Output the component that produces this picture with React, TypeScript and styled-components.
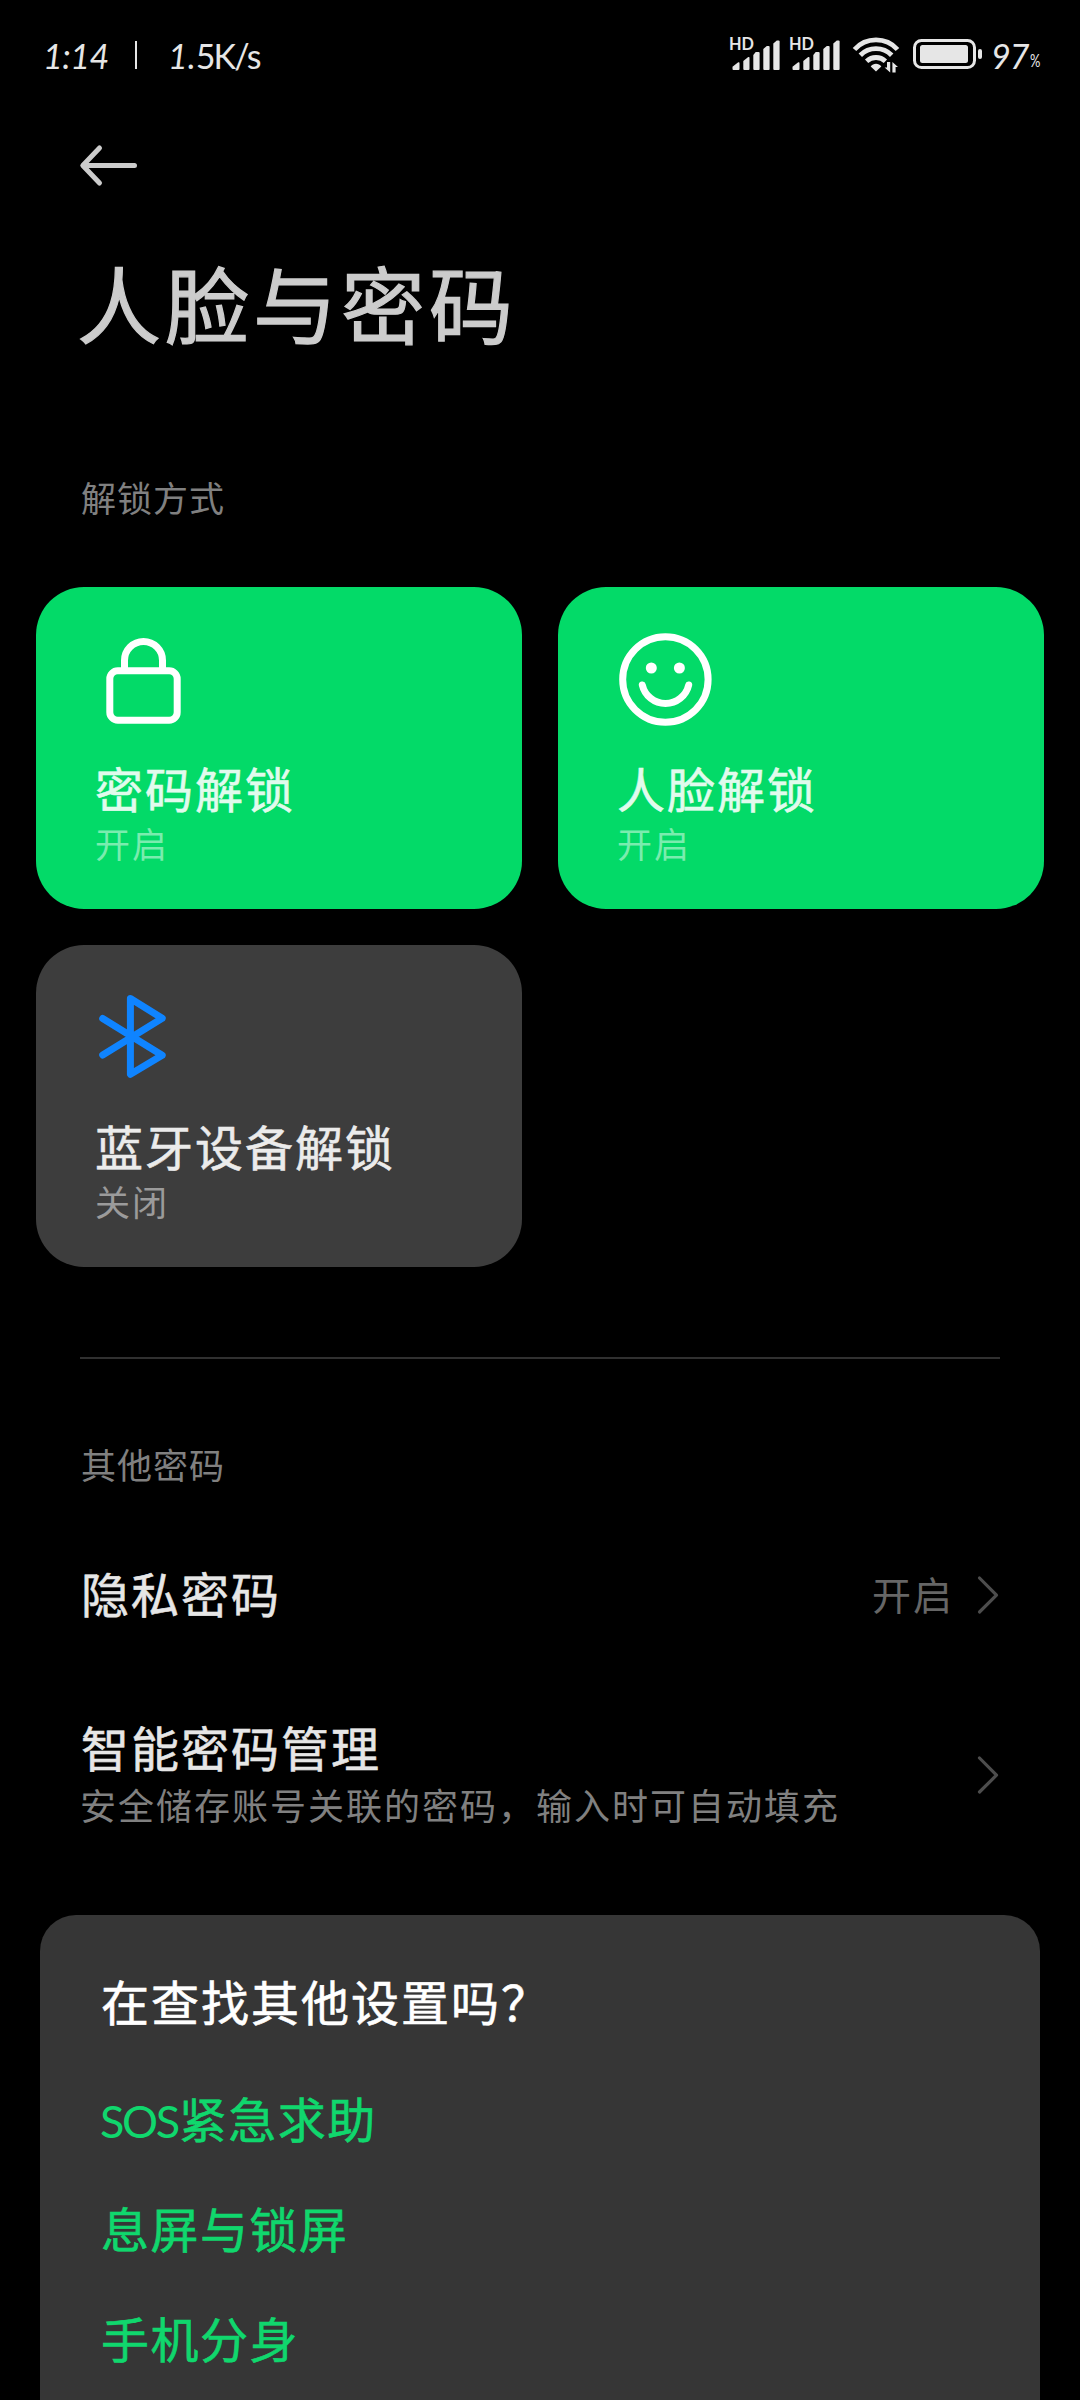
import React from "react";
import styled, { createGlobalStyle } from "styled-components";

const GlobalStyle = createGlobalStyle`
  html, body { margin: 0; padding: 0; background: #000; }
  * { box-sizing: border-box; }
`;

const cjk = `"Noto Sans CJK SC", "Noto Sans", sans-serif`;
const latin = `Lato, "Noto Sans CJK SC", sans-serif`;
const GREEN = "#03da68";

const Page = styled.main`
  width: 1080px;
  height: 2400px;
  overflow: hidden;
  display: flex;
  flex-direction: column;
  background: #000;
  font-family: ${cjk};
`;

const StatusBar = styled.header`
  height: 108px;
  flex: none;
  display: flex;
  align-items: center;
  justify-content: space-between;
  padding: 0 39px 0 43px;
  color: #e6e6e6;
  font-family: ${latin};
  font-size: 34px;
  line-height: 40px;
`;

const StatusGroup = styled.div`
  display: flex;
  align-items: center;
`;

const Clock = styled.span`
  width: 92px;
  font-style: italic;
  letter-spacing: -0.5px;
  padding-top: 3px;
`;

const Separator = styled.span`
  width: 2px;
  height: 28px;
  margin-top: 2px;
  background: #e6e6e6;
`;

const Speed = styled.span`
  margin-left: 31px;
  letter-spacing: -1.8px;
  padding-top: 3px;
`;

const Slanted = styled.span`
  font-style: italic;
  letter-spacing: 0;
`;

const Signal = styled.svg`
  width: 50px;
  height: 36px;
  margin-right: 10px;
  overflow: visible;
`;

const SignalTag = styled.text`
  font-family: ${latin};
  font-size: 16.5px;
  font-weight: 700;
`;

const Wifi = styled.svg`
  width: 48px;
  height: 38px;
  margin-left: 2px;
`;

const Battery = styled.svg`
  width: 70px;
  height: 32px;
  margin-left: 13px;
`;

const Level = styled.span`
  width: 37px;
  margin-left: 8px;
  padding-top: 3px;
  font-style: italic;
  letter-spacing: -1px;
`;

const Percent = styled.span`
  width: 11px;
  margin: 11px 0 0 2px;
  font-size: 18px;
  line-height: 20px;
  transform: scaleX(0.72);
  transform-origin: left center;
`;

const Nav = styled.nav`
  height: 114px;
  flex: none;
  display: flex;
  align-items: center;
  padding-left: 78px;
`;

const BackButton = styled.button`
  display: flex;
  padding: 0;
  border: 0;
  background: none;
`;

const Title = styled.h1`
  margin: 30px 0 0 77px;
  font-size: 84px;
  line-height: 100px;
  letter-spacing: 4px;
  font-weight: 400;
  color: #ccc;
  -webkit-text-stroke: 1.2px #ccc;
`;

const SectionLabel = styled.h2<{ $top: number }>`
  margin: ${(p) => p.$top}px 0 0 81px;
  font-size: 35px;
  line-height: 48px;
  letter-spacing: 1px;
  font-weight: 400;
  color: #808080;
`;

const CardGrid = styled.section`
  display: grid;
  grid-template-columns: 486px 486px;
  grid-auto-rows: 322px;
  gap: 36px;
  margin: 66px 36px 0;
`;

const Card = styled.article<{ $on: boolean }>`
  display: flex;
  flex-direction: column;
  padding: 40px 60px 0;
  border-radius: 48px;
  background: ${(p) => (p.$on ? GREEN : "#3d3d3d")};
`;

const CardIcon = styled.svg`
  width: 120px;
  height: 104px;
  flex: none;
  fill: none;
  stroke-width: 7;
`;

const CardTitle = styled.h3<{ $on: boolean }>`
  margin: 28px 0 0 -1px;
  font-size: 48px;
  line-height: 56px;
  letter-spacing: 2px;
  font-weight: 400;
  white-space: nowrap;
  color: ${(p) => (p.$on ? "#e1fbed" : "#ebebeb")};
  -webkit-text-stroke: 0.6px currentColor;
`;

const CardState = styled.p<{ $on: boolean }>`
  margin: 8px 0 0 -1px;
  font-size: 35px;
  line-height: 40px;
  letter-spacing: 2px;
  color: ${(p) => (p.$on ? "#7aecae" : "#9b9b9b")};
`;

const Divider = styled.hr`
  width: 920px;
  height: 2px;
  flex: none;
  margin: 90px 80px 0;
  border: 0;
  background: #303030;
`;

const List = styled.section`
  display: flex;
  flex-direction: column;
  margin-top: 17px;
`;

const Row = styled.div`
  height: 180px;
  display: flex;
  align-items: center;
  padding: 0 80px 0 81px;
`;

const RowText = styled.div`
  flex: 1;
  padding-bottom: 6px;
`;

const RowTitle = styled.div`
  font-size: 48px;
  line-height: 60px;
  letter-spacing: 2px;
  color: #e6e6e6;
  -webkit-text-stroke: 0.6px #e6e6e6;
`;

const RowNote = styled.div`
  margin: 4px 0 0 -1px;
  font-size: 36px;
  line-height: 48px;
  letter-spacing: 2px;
  white-space: nowrap;
  color: #808080;
`;

const RowValue = styled.span`
  margin-right: 22px;
  padding-bottom: 5px;
  font-size: 39px;
  line-height: 48px;
  letter-spacing: 2px;
  color: #666;
`;

const Panel = styled.section`
  flex: 1;
  margin: 50px 40px 0;
  padding: 55px 62px 0 61px;
  border-radius: 36px 36px 0 0;
  background: #363636;
`;

const PanelTitle = styled.h2`
  margin: 0 0 32px;
  font-size: 48px;
  line-height: 60px;
  letter-spacing: 2px;
  font-weight: 400;
  color: #fff;
  -webkit-text-stroke: 0.6px #fff;
`;

const PanelLink = styled.a`
  display: block;
  height: 110px;
  font-size: 48px;
  line-height: 110px;
  letter-spacing: 1.5px;
  color: #10d76d;
  -webkit-text-stroke: 0.6px #10d76d;
`;

const LatinRun = styled.span`
  margin: 0 1px 0 -1px;
  font-family: ${latin};
  font-size: 45px;
  line-height: 1;
  letter-spacing: -2.4px;
  -webkit-text-stroke: 0;
`;

const SignalIcon = () => (
  <Signal viewBox="0 0 50 36" fill="#e6e6e6">
    <SignalTag x="-1" y="14" textLength="25" lengthAdjust="spacingAndGlyphs">HD</SignalTag>
    <path d="M2.5 33v-2.2l5.4-4.4a1 1 0 0 1 1.6.8V33a1 1 0 0 1-1 1h-5a1 1 0 0 1-1-1z" />
    <path d="M13.3 33v-8l4.6-3.8a1 1 0 0 1 1.6.8v11a1 1 0 0 1-1 1h-4.2a1 1 0 0 1-1-1z" />
    <path d="M23.3 33V19l2.4-3h2.9a1 1 0 0 1 1 1v16a1 1 0 0 1-1 1h-4.3a1 1 0 0 1-1-1z" />
    <path d="M33.3 33V13l3.5-3h1.8a1 1 0 0 1 1 1v22a1 1 0 0 1-1 1h-4.3a1 1 0 0 1-1-1z" />
    <path d="M43.3 33V7.6l3.5-3h1.8a1 1 0 0 1 1 1V33a1 1 0 0 1-1 1h-4.3a1 1 0 0 1-1-1z" />
  </Signal>
);

const WifiIcon = () => (
  <Wifi viewBox="0 0 48 38" fill="none" stroke="#e6e6e6" strokeWidth="4.8">
    <path d="M2.5 14.5a29 29 0 0 1 43 0" />
    <path d="M8.3 20.2a22 22 0 0 1 31.4 0" />
    <path d="M14.6 26.2a13.8 13.8 0 0 1 18.8 0" />
    <path d="M18.7 31.4c2.5-3.4 8.1-3.4 10.6 0L24 36.4z" fill="#e6e6e6" stroke="none" />
    <path d="M38.2 27v10.5l-5.6-5h2.4V27zM40.4 37.5V27l5.6 5h-2.4v5.5z" fill="#e6e6e6" stroke="none" />
  </Wifi>
);

const BatteryIcon = () => (
  <Battery viewBox="0 0 70 32">
    <rect x="1.5" y="2.5" width="60" height="27" rx="7" fill="none" stroke="#e6e6e6" strokeWidth="3" />
    <rect x="7" y="7" width="48" height="18" rx="2.5" fill="#e6e6e6" />
    <rect x="65" y="11" width="4" height="10" rx="2" fill="#e6e6e6" />
  </Battery>
);

const LockIcon = () => (
  <CardIcon viewBox="0 0 120 104" stroke="#fff">
    <rect x="13.8" y="43.8" width="67.4" height="49.4" rx="8" />
    <path d="M28.5 43V33.5a19 19 0 0 1 38 0V43" />
  </CardIcon>
);

const SmileIcon = () => (
  <CardIcon viewBox="0 0 120 104" stroke="#fff">
    <circle cx="47.4" cy="52.5" r="42.7" />
    <circle cx="33.3" cy="41" r="5.5" fill="#fff" stroke="none" />
    <circle cx="61.4" cy="41" r="5.5" fill="#fff" stroke="none" />
    <path d="M24.3 58a23.8 23.8 0 0 0 46.4 0" strokeLinecap="round" />
  </CardIcon>
);

const BluetoothIcon = () => (
  <CardIcon viewBox="0 0 120 104" stroke="#0f84ff" strokeLinecap="round" strokeLinejoin="round">
    <path d="M6.7 33.5L66.2 70.3L34.4 89.3V13.6L66.2 33.3L6.7 70" />
  </CardIcon>
);

const Chevron = () => (
  <svg width="24" height="40" viewBox="0 0 24 40" fill="none" stroke="#4d4d4d" strokeWidth="3.2" strokeLinecap="round" strokeLinejoin="round">
    <path d="M3.5 3L20.5 20.2L3.5 37" />
  </svg>
);

const methods = [
  { name: "密码解锁", on: true, Icon: LockIcon },
  { name: "人脸解锁", on: true, Icon: SmileIcon },
  { name: "蓝牙设备解锁", on: false, Icon: BluetoothIcon },
];

export default function App() {
  return (
    <Page>
      <GlobalStyle />
      <StatusBar>
        <StatusGroup>
          <Clock>1:14</Clock>
          <Separator />
          <Speed><Slanted>1.</Slanted>5K/s</Speed>
        </StatusGroup>
        <StatusGroup>
          <SignalIcon />
          <SignalIcon />
          <WifiIcon />
          <BatteryIcon />
          <Level>97</Level>
          <Percent>%</Percent>
        </StatusGroup>
      </StatusBar>
      <Nav>
        <BackButton aria-label="返回">
          <svg width="62" height="44" viewBox="0 0 62 44" fill="none" stroke="#ccc" strokeWidth="5" strokeLinecap="round" strokeLinejoin="round">
            <path d="M21.5 5L4.8 22.5L21.5 40M5.5 22.5H56.5" />
          </svg>
        </BackButton>
      </Nav>
      <Title>人脸与密码</Title>
      <SectionLabel $top={121}>解锁方式</SectionLabel>
      <CardGrid>
        {methods.map(({ name, on, Icon }) => (
          <Card key={name} $on={on}>
            <Icon />
            <CardTitle $on={on}>{name}</CardTitle>
            <CardState $on={on}>{on ? "开启" : "关闭"}</CardState>
          </Card>
        ))}
      </CardGrid>
      <Divider />
      <SectionLabel $top={81}>其他密码</SectionLabel>
      <List>
        <Row>
          <RowText>
            <RowTitle>隐私密码</RowTitle>
          </RowText>
          <RowValue>开启</RowValue>
          <Chevron />
        </Row>
        <Row>
          <RowText>
            <RowTitle>智能密码管理</RowTitle>
            <RowNote>安全储存账号关联的密码，输入时可自动填充</RowNote>
          </RowText>
          <Chevron />
        </Row>
      </List>
      <Panel>
        <PanelTitle>在查找其他设置吗？</PanelTitle>
        <PanelLink>
          <LatinRun>SOS</LatinRun>紧急求助
        </PanelLink>
        <PanelLink>息屏与锁屏</PanelLink>
        <PanelLink>手机分身</PanelLink>
      </Panel>
    </Page>
  );
}
